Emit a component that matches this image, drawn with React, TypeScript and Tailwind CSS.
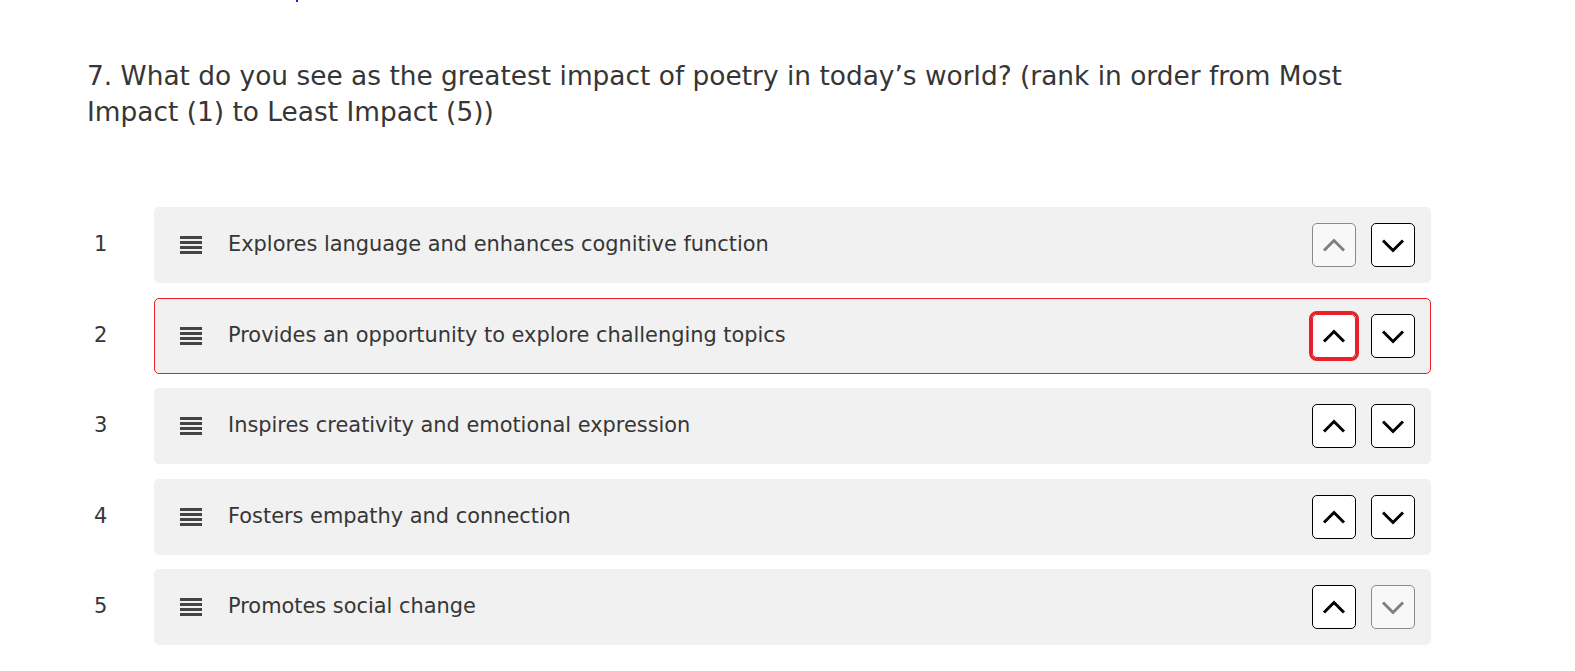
import { useState } from "react";

const ITEMS = [
  "Explores language and enhances cognitive function",
  "Provides an opportunity to explore challenging topics",
  "Inspires creativity and emotional expression",
  "Fosters empathy and connection",
  "Promotes social change",
];

function Chevron({ dir }: { dir: "up" | "down" }) {
  return (
    <svg width="26" height="26" viewBox="0 0 26 26" fill="none" stroke="currentColor" strokeWidth="3">
      {dir === "up" ? <path d="M3 18.5l10-10 10 10" /> : <path d="M3 8.5l10 10 10-10" />}
    </svg>
  );
}

function DragHandle() {
  return (
    <div className="flex w-[22px] flex-col gap-[2px]">
      <span className="h-[3px] bg-[#444]" />
      <span className="h-[3px] bg-[#444]" />
      <span className="h-[3px] bg-[#444]" />
      <span className="h-[3px] bg-[#444]" />
    </div>
  );
}

function MoveButton({ dir, disabled, focused }: { dir: "up" | "down"; disabled?: boolean; focused?: boolean }) {
  let cls = "border-black bg-white text-black";
  if (disabled) cls = "border-[#8a8a8a] bg-[#f8f8f8] text-[#808080]";
  if (focused) cls = "border-[#e8202a] bg-white text-black outline-[3px] outline-solid outline-[#e8202a]";
  return (
    <button
      type="button"
      disabled={disabled}
      className={`flex h-[44px] w-[44px] items-center justify-center rounded-[5px] border ${cls}`}
    >
      <Chevron dir={dir} />
    </button>
  );
}

export default function App() {
  const [items] = useState(ITEMS);
  const focusedIndex = 1;

  return (
    <div
      className="relative h-[671px] overflow-hidden bg-white text-[#363636]"
      style={{ fontFamily: "'DejaVu Sans', Verdana, sans-serif" }}
    >
      {/* stray link dot at top */}
      <span className="absolute left-[296px] top-0 h-[2px] w-[2px] bg-[#1a1aff]" />

      <div className="pl-[87px] pt-[58px]">
        <h2 className="max-w-[1290px] text-[26.4px] leading-[36px]">
          7. What do you see as the greatest impact of poetry in today’s world? (rank in order from Most Impact (1) to Least Impact (5))
        </h2>
      </div>

      <ol className="mt-[77px] flex flex-col gap-[14.5px] pr-[144px]">
        {items.map((text, i) => (
          <li key={text} className="flex items-center">
            <span className="w-[154px] pl-[94px] text-[21px]">{i + 1}</span>
            <div
              className={`flex h-[76px] flex-1 items-center rounded-[5px] border bg-[#f1f1f1] pl-[25px] pr-[15px] ${
                i === focusedIndex ? "border-[#ee1c25]" : "border-[#f1f1f1]"
              }`}
            >
              <DragHandle />
              <span className="ml-[26px] flex-1 text-[20.9px]">{text}</span>
              <div className="flex gap-[15px]">
                <MoveButton dir="up" disabled={i === 0} focused={i === focusedIndex} />
                <MoveButton dir="down" disabled={i === items.length - 1} />
              </div>
            </div>
          </li>
        ))}
      </ol>
    </div>
  );
}
